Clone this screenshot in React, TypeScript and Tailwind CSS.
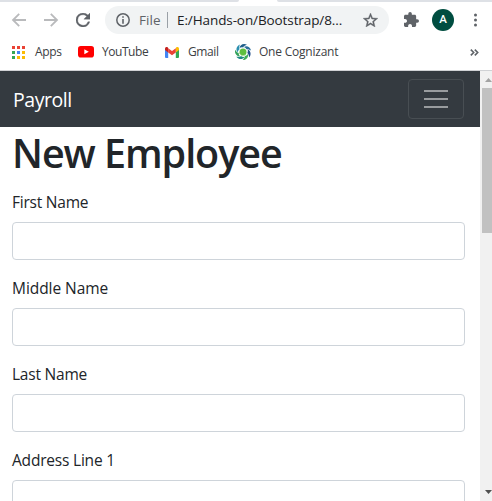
import React from 'react';

const BackArrow = ({ flip = false }: { flip?: boolean }) => (
  <svg viewBox="0 0 16 16" className={`h-4 w-4 shrink-0 ${flip ? '-scale-x-100' : ''}`} fill="none" stroke="#b9babc" strokeWidth="1.8">
    <path d="M15 8H2.5M8.2 1.8 2 8l6.200 6.200" />
  </svg>
);

const Reload = () => (
  <svg viewBox="4 4 16 16" className="h-[14px] w-[14px] shrink-0" fill="#5f6368" stroke="#5f6368" strokeWidth="0.400">
    <path d="M17.650 6.350A7.960 7.960 0 0 0 12 4a8 8 0 1 0 7.730 10h-2.080A6 6 0 1 1 12 6c1.660 0 3.140.69 4.220 1.780L13 11h7V4z" />
  </svg>
);

const Info = () => (
  <svg viewBox="0 0 14 14" className="h-[14px] w-[14px] shrink-0">
    <circle cx="7" cy="7" r="6.200" fill="none" stroke="#5f6368" strokeWidth="1.500" />
    <path d="M6.200 3.200h1.600v1.600H6.200zM6.200 6h1.600v4.800H6.200z" fill="#5f6368" />
  </svg>
);

const Star = () => (
  <svg viewBox="2 2 20 19" className="h-[14px] w-[15px] shrink-0" fill="#5f6368" stroke="#5f6368" strokeWidth="0.500">
    <path d="M22 9.240l-7.190-.62L12 2 9.190 8.630 2 9.240l5.460 4.730L5.820 21 12 17.270 18.180 21l-1.630-7.030L22 9.240zM12 15.400l-3.760 2.270 1-4.280-3.320-2.880 4.380-.38L12 6.100l1.710 4.040 4.380.38-3.320 2.880 1 4.280L12 15.400z" />
  </svg>
);

const Puzzle = () => (
  <svg viewBox="2 1 21 21" className="h-[15px] w-[15px] shrink-0" fill="#5f6368">
    <path d="M20.500 11H19V7c0-1.100-.9-2-2-2h-4V3.500a2.500 2.500 0 0 0-5 0V5H4c-1.100 0-1.990.9-1.990 2v3.800H3.500c1.490 0 2.700 1.210 2.700 2.700s-1.210 2.700-2.700 2.700H2V20c0 1.100.9 2 2 2h3.800v-1.500c0-1.490 1.210-2.700 2.700-2.700s2.700 1.210 2.700 2.700V22H17c1.100 0 2-.9 2-2v-4h1.500a2.500 2.500 0 0 0 0-5z" />
  </svg>
);

const appColors = ['#ea4335', '#ea4335', '#ea4335', '#34a853', '#4285f4', '#fbbc04', '#34a853', '#fbbc04', '#fbbc04'];

const AppsGrid = () => (
  <svg viewBox="0 0 13 13" className="h-[13px] w-[13px] shrink-0">
    {appColors.map((c, i) => (
      <rect key={i} x={(i % 3) * 5} y={Math.floor(i / 3) * 5} width="3" height="3" fill={c} />
    ))}
  </svg>
);

const YouTube = () => (
  <svg viewBox="0 0 16 12" className="h-3 w-4 shrink-0">
    <rect width="16" height="11.500" rx="2.800" fill="#f00" />
    <path d="M6.300 3.300v5L10.800 5.800z" fill="#fff" />
  </svg>
);

const Gmail = () => (
  <svg viewBox="0 0 14 11" className="h-[11px] w-[14px] shrink-0">
    <path d="M0 2.500V10a1 1 0 0 0 1 1h2.200V4.500z" fill="#4285f4" />
    <path d="M10.800 4.500V11H13a1 1 0 0 0 1-1V2.500z" fill="#34a853" />
    <path d="M10.800 1v4.500L14 3.100V1.700C14 .1 12.200-.4 11.200.5z" fill="#fbbc04" />
    <path d="M3.200 1.200 7 4l3.800-2.800v4.300L7 8.300 3.200 5.500z" fill="#ea4335" />
    <path d="M0 1.700v1.400l3.200 2.400V1L2.800.5C1.800-.4 0 .1 0 1.700z" fill="#c5221f" />
  </svg>
);

const swirlColors = ['#1f5f8a', '#2b6f9c', '#24508a', '#3fae5a', '#1f8a84', '#35a35c', '#2b8fb0'];

const Swirl = () => (
  <svg viewBox="-8 -8 16 16" className="h-4 w-4 shrink-0">
    {swirlColors.map((c, i) => (
      <path key={i} d="M-3.400-3.900C-3.200-7 .2-9 4-7.200 2.300-6.600.8-5.900.1-4.400-1-4.800-2.200-4.700-3.400-3.900z" fill={c} transform={`rotate(${(i * 360) / 7})`} />
    ))}
    <circle r="3.500" fill="#5fbf3f" />
    <path d="M-3.700 0A3.700 3.700 0 0 0 2 3.100" fill="none" stroke="#a9dc91" strokeWidth="0.900" />
  </svg>
);

const Toolbar = () => (
  <div className="flex h-9 items-center">
    <div className="ml-[11px] flex"><BackArrow /></div>
    <div className="ml-4 flex"><BackArrow flip /></div>
    <div className="ml-[17px] flex"><Reload /></div>
    <div className="ml-[15px] flex h-7 w-[284px] items-center rounded-full bg-[#f1f3f4] pl-[11px] pr-[11px] text-[13.500px]">
      <Info />
      <span className="ml-[9px] w-[28px] whitespace-nowrap tracking-[0.100px] text-[#5f6368]">File</span>
      <span className="h-4 w-px shrink-0 bg-[#9aa0a6]" />
      <span className="ml-[9px] flex-1 whitespace-nowrap text-[13.500px] tracking-[-0.100px] text-[#202124]">E:/Hands-on/Bootstrap/8...</span>
      <Star />
    </div>
    <div className="ml-[15px] flex pb-px"><Puzzle /></div>
    <div className="ml-[13px] flex h-[22px] w-[22px] items-center justify-center rounded-full bg-[#004d40] font-[Roboto] text-[11.500px] font-medium text-white">A</div>
    <svg viewBox="0 0 4 14" className="ml-[19px] h-[14px] w-1 shrink-0" fill="#5f6368">
      <circle cx="2.500" cy="2" r="1.500" /><circle cx="2.500" cy="7" r="1.500" /><circle cx="2.500" cy="12" r="1.500" />
    </svg>
  </div>
);

const Bookmarks = () => (
  <div className="flex h-8 items-center whitespace-nowrap pb-1 text-[12px] text-[#3c4043]">
    <div className="ml-3 flex w-[66px] items-center gap-[10px] tracking-[-0.300px]"><AppsGrid />Apps</div>
    <div className="flex w-[87px] items-center gap-2 tracking-[-0.450px]"><YouTube />YouTube</div>
    <div className="flex w-[70px] items-center gap-[9px] tracking-[-0.400px]"><Gmail />Gmail</div>
    <div className="flex w-[235px] items-center gap-2 tracking-[-0.220px]"><Swirl />One Cognizant</div>
    <svg viewBox="0 0 9 7" className="h-[7px] w-[9px]" fill="none" stroke="#5f6368" strokeWidth="1.600">
      <path d="M.8.600 3.700 3.500.8 6.400M4.800.600 7.700 3.500 4.800 6.400" />
    </svg>
  </div>
);

const fields = [
  { label: 'First Name', tracking: 'tracking-[-0.220px]' },
  { label: 'Middle Name', tracking: 'tracking-[-0.060px]' },
  { label: 'Last Name', tracking: 'tracking-[-0.220px]' },
  { label: 'Address Line 1', tracking: 'tracking-[-0.200px]' },
];

export default function App() {
  return (
    <div className="flex h-[501px] w-[492px] flex-col overflow-hidden bg-white font-['Open_Sans','Noto_Sans',sans-serif]">
      <div className="flex h-[2px] shrink-0">
        <div className="h-[2px] w-[239px] rounded-br-sm bg-[#dee1e6]" />
        <div className="w-[38px]" />
        <div className="h-[2px] flex-1 rounded-bl-sm bg-[#dee1e6]" />
      </div>
      <Toolbar />
      <Bookmarks />
      <div className="h-px shrink-0 bg-[#d0d2d5]" />
      <div className="flex min-h-0 flex-1">
        <main className="w-[480px] shrink-0 overflow-hidden">
          <nav className="flex h-14 items-center justify-between bg-[#343a40] pl-[13px] pr-4">
            <span className="pt-[2px] text-[19.500px] tracking-[-0.450px] text-white">Payroll</span>
            <button className="flex h-10 w-14 flex-col items-center justify-center gap-[6px] rounded border border-[#484e53]">
              <span className="h-[2px] w-6 bg-[#999c9f]" />
              <span className="h-[2px] w-6 bg-[#999c9f]" />
              <span className="h-[2px] w-6 bg-[#999c9f]" />
            </button>
          </nav>
          <div className="pl-3 pr-[15px] text-[#212529]">
            <h1 className="mb-[15px] h-12 whitespace-nowrap pt-[2px] text-[39.500px] font-semibold leading-[48px] tracking-[-1.050px]">New Employee</h1>
            <form>
              {fields.map((f) => (
                <div key={f.label} className="mb-4">
                  <label className={`mb-2 block h-6 text-[15.500px] leading-[25px] ${f.tracking}`}>{f.label}</label>
                  <input className="block h-[38px] w-full rounded border border-[#ced4da] bg-white" />
                </div>
              ))}
            </form>
          </div>
        </main>
        <aside className="flex w-3 flex-col bg-[#f1f1f1]">
          <div className="flex h-[17px] justify-end pt-[7px]">
            <svg viewBox="0 0 7 4" className="h-1 w-[7px]" fill="#a3a3a3"><path d="M0 4 3.500 0 7 4z" /></svg>
          </div>
          <div className="ml-[2px] h-[145px] bg-[#c1c1c1]" />
          <div className="mt-auto flex h-[11px] justify-end">
            <svg viewBox="0 0 7 4" className="h-1 w-[7px]" fill="#505050"><path d="M0 0h7L3.500 4z" /></svg>
          </div>
        </aside>
      </div>
    </div>
  );
}
